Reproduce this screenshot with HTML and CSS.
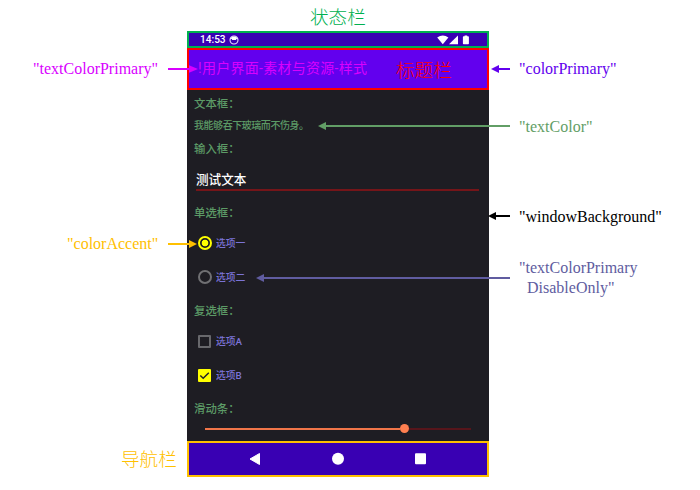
FILE: index.html
```html
<!DOCTYPE html>
<html lang="zh-CN">
<head>
<meta charset="utf-8">
<title>样式</title>
<link rel="stylesheet" href="styles.css">
</head>
<body>
<main class="canvas">
  <section class="phone">
    <header class="status">
      <span class="clock">14:53</span>
      <svg class="face" width="10" height="10" viewBox="0 0 10 10"><circle cx="5" cy="5" r="4" fill="none" stroke="#e8e0fa" stroke-width="1.1"/><path d="M1.4 4.5V3Q5 .2 8.6 3v1.5L7.5 3.8 7 5H3.2L2.7 3.8Z" fill="#fff"/></svg>
      <svg class="signals" width="33" height="10" viewBox="0 0 33 10" fill="#fff"><path d="M.2 2.4Q5.8-1.6 11.4 2.4L5.8 9.3Z"/><path d="M12 9.3 21 .5V9.3Z"/><path d="M26.7 1.2h.9V.4h2.6v.8h.9q.8 0 .8.8v6.6q0 .7-.7.7h-4.6q-.7 0-.7-.7V2q0-.8.8-.8Z"/></svg>
    </header>
    <div class="titlebar">!用户界面-素材与资源-样式</div>
    <div class="content">
      <div class="label first">文本框：</div>
      <div class="sample">我能够吞下玻璃而不伤身。</div>
      <div class="label second">输入框：</div>
      <div class="field">测试文本</div>
      <div class="label">单选框：</div>
      <div class="option"><span class="radio on"></span>选项一</div>
      <div class="option"><span class="radio"></span>选项二</div>
      <div class="label">复选框：</div>
      <div class="option"><span class="check"></span>选项A</div>
      <div class="option"><span class="check on"><svg width="13" height="13" viewBox="0 0 13 13"><path d="M2.3 6.5 5.2 9.3 10.8 3.7" fill="none" stroke="#222228" stroke-width="1.5"/></svg></span>选项B</div>
      <div class="label">滑动条：</div>
      <div class="slider"><span class="filled"></span><span class="thumb"></span><span class="rest"></span></div>
    </div>
    <nav class="navbar">
      <svg width="12" height="14" viewBox="0 0 12 14"><path d="M1 7 10.5 1.5V12.5Z" fill="#fff" stroke="#fff" stroke-linejoin="round"/></svg>
      <svg width="12" height="14" viewBox="0 0 12 14"><circle cx="6" cy="6.7" r="6" fill="#fff"/></svg>
      <svg width="12" height="14" viewBox="0 0 12 14"><rect x="0" y="1.2" width="11" height="11" rx="1" fill="#fff"/></svg>
    </nav>
  </section>

  <svg class="arrows" width="700" height="490" viewBox="0 0 700 490">
    <g fill="#d900ff"><path d="M168 68h22v2h-22Z"/><path d="M189 65.2 198 69 189 72.8Z"/></g>
    <g fill="#ffc000"><path d="M168 243h22v2h-22Z"/><path d="M189 240 197 244 189 248Z"/></g>
    <g fill="#6200ee"><path d="M498 68h12v2h-12Z"/><path d="M499 65 491 69 499 73Z"/></g>
    <g fill="#629e66"><path d="M325 125h185v2H325Z"/><path d="M326 122 318 126 326 130Z"/></g>
    <g fill="#000"><path d="M495 215h15v2h-15Z"/><path d="M496 212 488 216 496 220Z"/></g>
    <g fill="#605ca0"><path d="M263 277h247v2H263Z"/><path d="M264 274 256 278 264 282Z"/></g>
  </svg>

  <div class="zone zone-status">状态栏</div>
  <div class="zone zone-title">标题栏</div>
  <div class="zone zone-nav">导航栏</div>
  <div class="note note-text-primary">"textColorPrimary"</div>
  <div class="note note-accent">"colorAccent"</div>
  <div class="note note-primary">"colorPrimary"</div>
  <div class="note note-text">"textColor"</div>
  <div class="note note-window">"windowBackground"</div>
  <div class="note note-disable">"textColorPrimary<br><span class="indent">DisableOnly"</span></div>
</main>
</body>
</html>
```
FILE: styles.css
```css
* { box-sizing: border-box; }
body { margin: 0; background: #fff; }
.canvas { position: relative; width: 700px; height: 490px; padding: 31px 0 0 187px; overflow: hidden; }
.phone { width: 302px; height: 446px; display: flex; flex-direction: column; background: #1e1d23; font-family: Roboto, "Noto Sans CJK SC", sans-serif; }

.status { height: 17px; border: 2px solid #00b050; background: #3900b3; color: #fff; display: flex; align-items: center; padding: 0 17px 0 11px; }
.clock { font-size: 10.1px; font-weight: 500; line-height: 13px; width: 25px; white-space: nowrap; }
.face { margin-left: 4px; }
.signals { margin-left: auto; }
.titlebar { height: 42px; border: 2px solid #f00; background: #6200ee; color: #d900ff; font-size: 14px; letter-spacing: 0.28px; line-height: 37px; padding-left: 9px; white-space: nowrap; }

.content { height: 351px; padding-left: 7px; color: #5c9a66; }
.label { height: 30px; padding-top: 3px; font-size: 11.4px; line-height: 28px; font-weight: 500; }
.label.first { height: 26px; padding: 1px 0 0; line-height: 26px; }
.label.second { height: 24px; padding: 1px 0 0; line-height: 24px; }
.sample { height: 20px; font-size: 10px; letter-spacing: -0.45px; line-height: 20px; font-weight: 500; }
.field { width: 283px; height: 31px; margin: 0 0 5px 2px; padding-top: 8px; border-bottom: 2px solid #751519; color: #fff; font-size: 12.6px; font-weight: 500; line-height: 23px; }
.option { height: 34px; display: flex; align-items: center; gap: 4px; padding-left: 4px; color: #7b74d8; font-size: 9.8px; font-weight: 500; }
.radio { width: 14px; height: 14px; border: 2px solid #707073; border-radius: 50%; }
.radio.on { border-color: #ff0; background: radial-gradient(circle, #ff0 2.9px, transparent 3.7px); }
.check { width: 13px; height: 13px; margin-right: 1px; border: 2px solid #68686c; border-radius: 1px; }
.check.on { border: 0; background: #ff0; }
.check svg { display: block; }
.slider { height: 13px; display: flex; align-items: center; padding-left: 11px; }
.filled { width: 195px; height: 2px; background: #f17549; }
.thumb { width: 9px; height: 9px; border-radius: 50%; background: #ff7f50; }
.rest { width: 62px; height: 2px; background: #57151b; }
.navbar { height: 36px; border: 2px solid #ffc000; background: #3900b3; display: flex; align-items: center; justify-content: center; gap: 71px; }

.arrows { position: absolute; left: 0; top: 0; }
.zone { position: absolute; font: 300 18.6px/24px "Noto Sans CJK SC", sans-serif; white-space: nowrap; }
.zone-status { left: 310px; top: 4px; color: #00b050; }
.zone-title { left: 396px; top: 57px; color: #f00; }
.zone-nav { left: 121px; top: 446px; color: #ffc000; }
.note { position: absolute; font: 16px/20px "Liberation Serif", serif; white-space: nowrap; }
.note-text-primary { left: 33px; top: 59px; color: #d900ff; }
.note-accent { left: 67px; top: 234px; color: #ffc000; }
.note-primary { left: 519px; top: 59px; color: #6200ee; }
.note-text { left: 519px; top: 117px; color: #629e66; }
.note-window { left: 519px; top: 207px; color: #000; }
.note-disable { left: 519px; top: 258px; color: #605ca0; }
.indent { padding-left: 8px; }
```
